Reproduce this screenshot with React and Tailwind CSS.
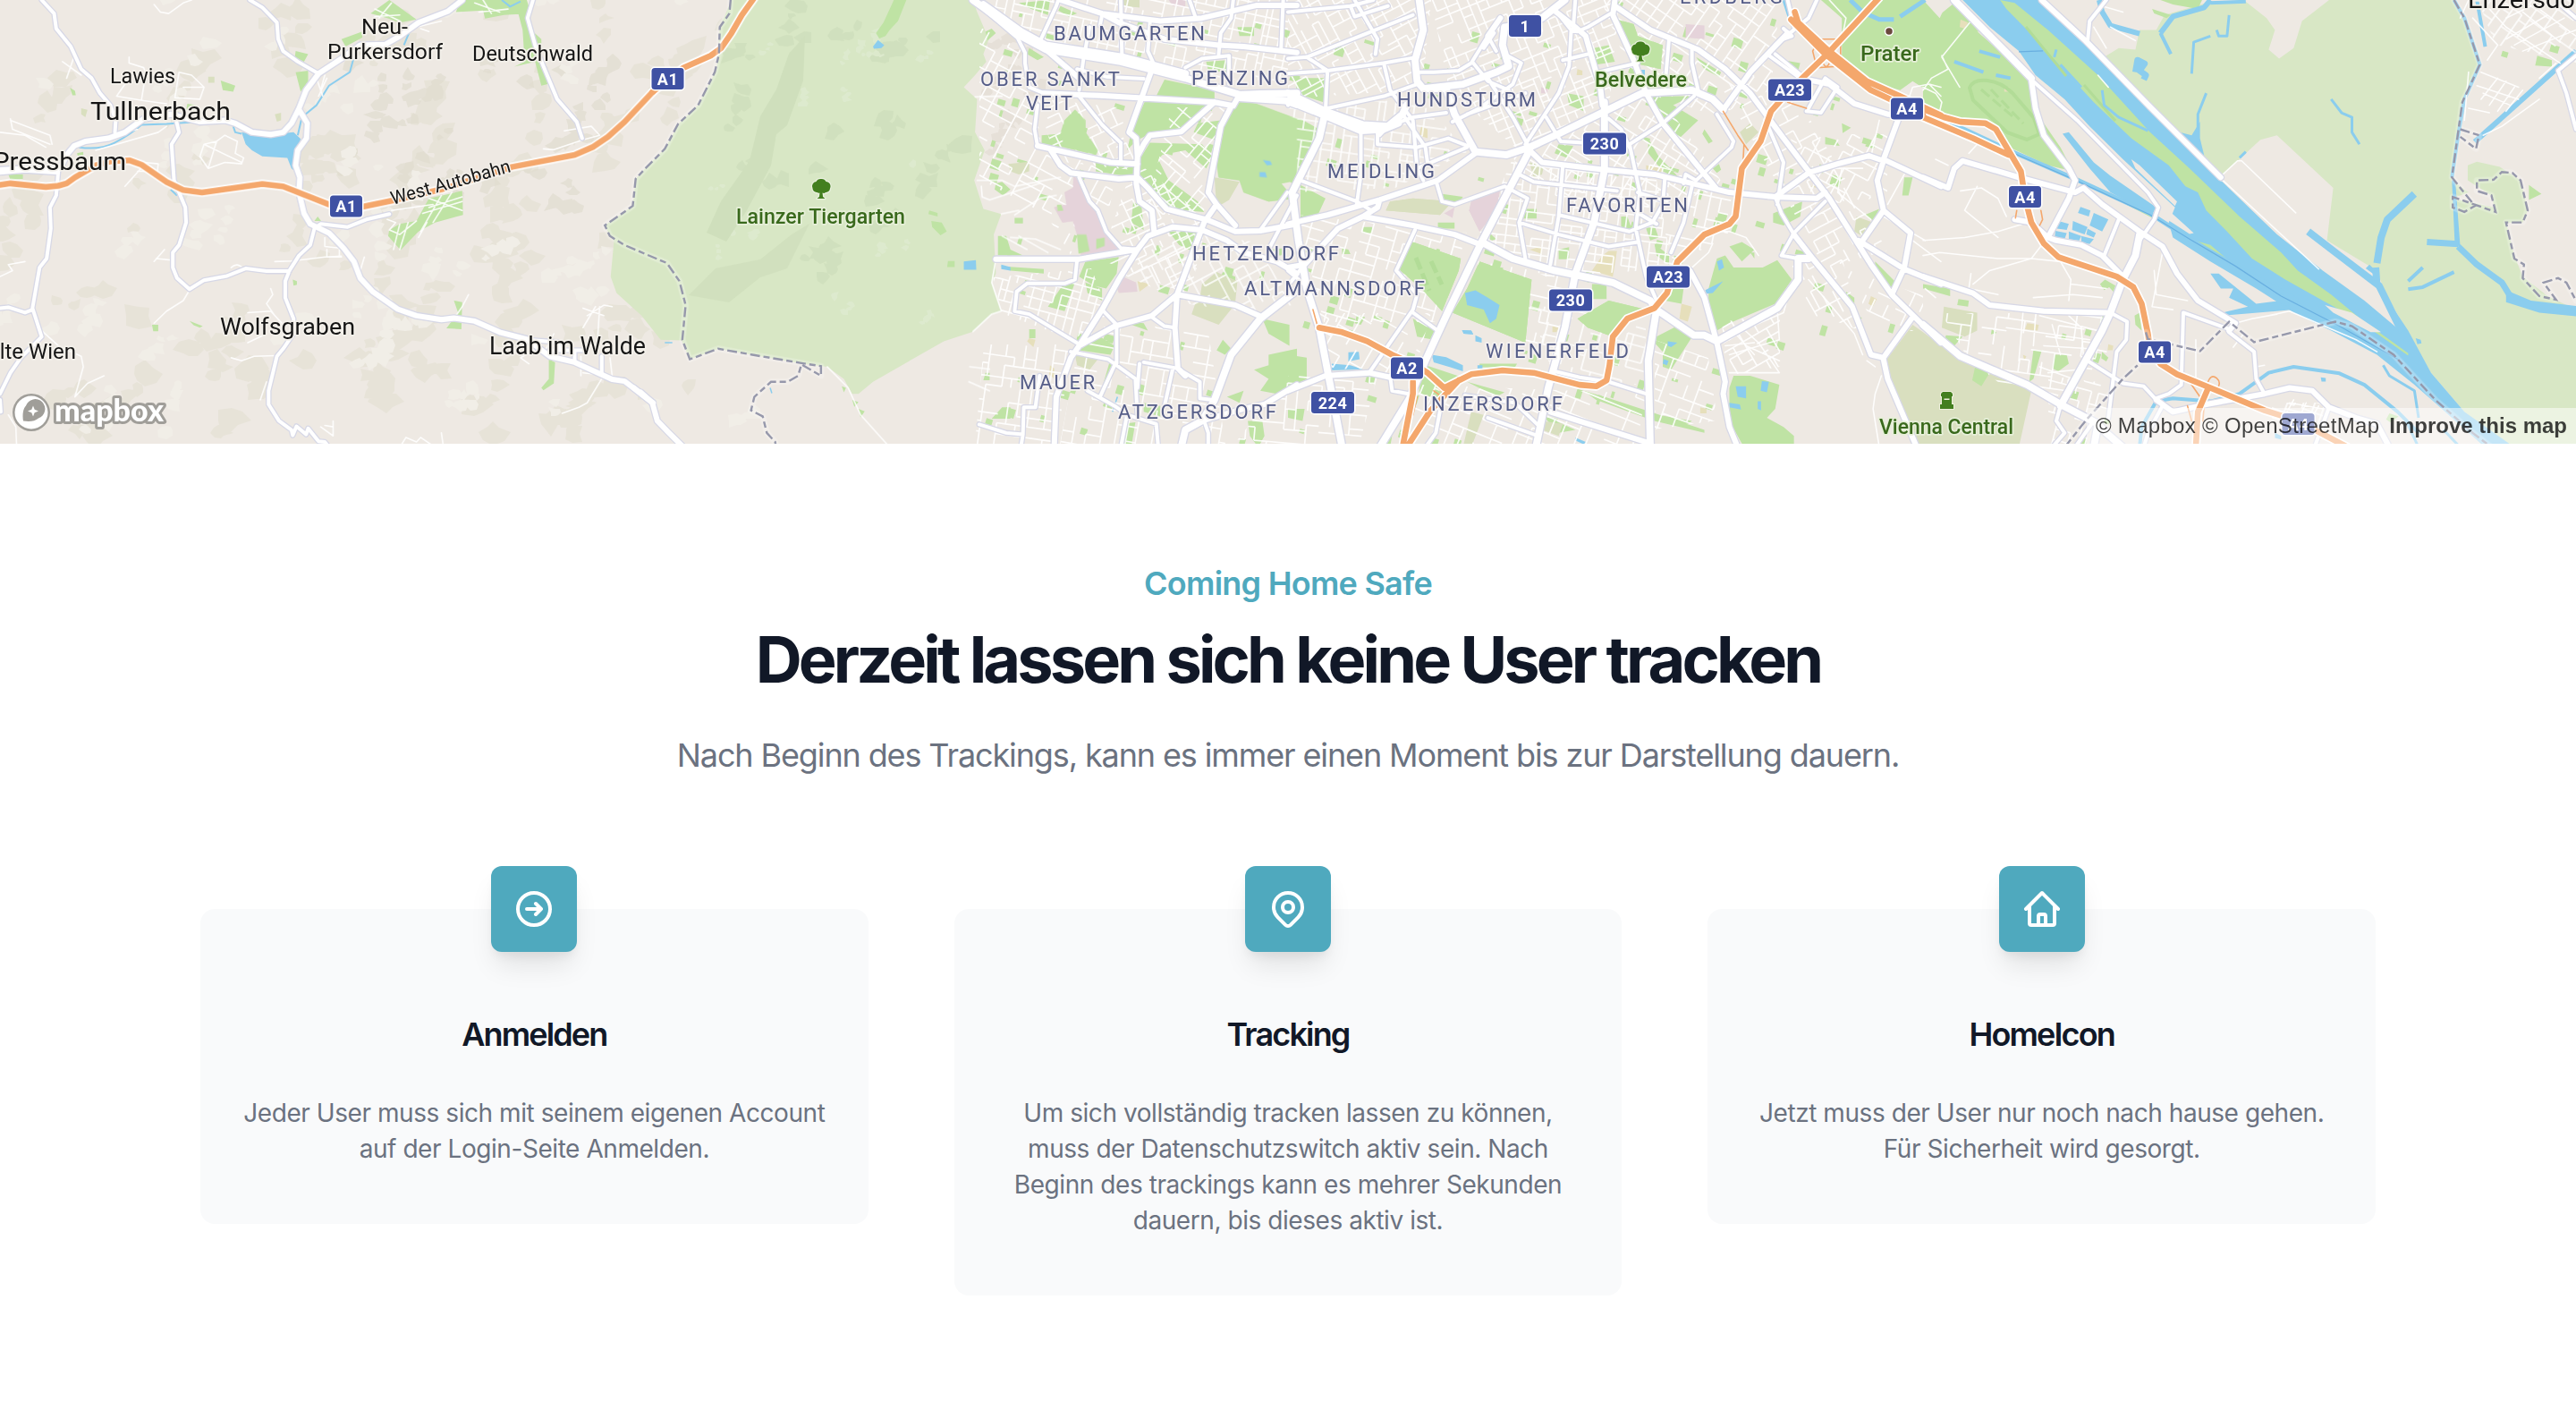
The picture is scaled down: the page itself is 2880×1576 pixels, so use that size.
import React from "react";

/* ------------------------------------------------------------------ */
/* Map data. Each tile keeps its own local grid and is placed by scale. */
/* ------------------------------------------------------------------ */

const SX = 730 / 1568;
const SY = 500 / 1488;

const LAND = "#eee9e3";
const PARK = "#bfe3a4";
const WOOD = "#d8e7c5";
const WATER = "#8bcdee";
const OLIVE = "#d9dfbf";
const TAN = "#e6dfbb";
const PINK = "#e5d3da";

const TILES = [
  {
    x: 0,
    woods: [],
    areas: [
      [PARK, "M890 45L935 0 1000 65 960 75 930 60zM820 130L870 105 870 125 830 155zM1105 0L1265 0 1275 45 1210 50 1165 62 1160 35 1095 40zM1240 20L1265 10 1268 90 1300 130 1300 200 1315 280 1300 285 1285 205 1235 222 1260 205 1255 100zM710 170L740 180 730 205 708 190zM710 240L740 235 740 270 722 305zM1030 660L1110 635 1112 715 1045 740 1005 770 962 832 932 785 935 765 960 745 1000 735zM530 268L565 285 560 305 535 300zM1090 1000L1110 1005 1108 1095 1072 1092 1100 1040zM1318 1195L1333 1205 1330 1275 1305 1298 1300 1290 1318 1260zM365 1080l15 0 0 22 -12 0zM455 1068L487 1085 480 1090 465 1082zM168 292l12 10 2 15 -8 0zM755 735l8 -15 8 15zM703 930l10 5 0 12 -8 3zM450 345l20 5 -5 20 -18 -5zM185 510l15 -5 0 20 -12 0zM20 580l35 0 0 15 -30 3zM408 370l20 0 0 20 -20 0z"],
      [OLIVE, "M500 255l15 0 0 20 -15 0zM195 360l15 5 -5 25 -10 -10zM660 380l15 -5 0 25 -10 5z"],
      [WATER, "M580 440L620 450 655 455 690 442 705 440 722 462 712 500 708 570 700 560 690 525 630 520 605 500 590 480z"],
    ],
    streams: [
      [2, "M850 190L840 240 790 285 760 350 725 390 715 450M190 490Q240 500 275 475T340 415L400 412 480 405M560 420L565 440 580 445M1205 0L1225 22 1250 5M985 100L970 150M410 630L425 650"],
    ],
    thin: "M310 190L310 210 345 225 350 245 315 250 280 320 345 335 400 345M350 245L340 330M430 240L460 250 490 290 480 330 420 325 430 240M440 290L490 290M150 205L195 250M180 180L160 260M370 15L385 40 405 45 440 10 460 0M25 395L30 430 120 480M0 440L60 450 110 490M25 400L120 450 125 480M200 480L330 430M230 500L380 440 400 420M345 540L380 545 378 570 330 570M345 550L300 620M540 450L570 470 565 510 585 525 580 545 540 540 500 560 480 520 490 480 520 470 540 450M520 470L500 560M490 480L580 540M760 260L775 320M780 250L770 300M785 260L765 320M940 700L1040 680M1030 660L1110 700M1030 690L1110 655M1015 710L1110 670M1060 650L1010 770M1085 640L1040 740M935 765L960 780 1000 735M960 745L945 830M980 740L960 830M930 730L950 740 935 765M780 790L780 820 815 825 815 855M785 830L785 855 820 855M700 868L780 855 820 852M875 855L865 900M375 860L410 865M395 830L370 870M555 890Q570 870 585 895M455 965L440 1000 400 1035 370 1075M650 960L655 980 640 1010 660 1050M595 1040L650 1035 680 1080M595 1140L640 1110M555 1190L580 1200 610 1185 660 1183M100 1100L140 1150 195 1185 200 1220 180 1320M180 1320L210 1275 250 1250M20 1380L38 1420 40 1488M640 1270L625 1330M780 1415L800 1420M800 1400L800 1450 770 1420M960 1488L975 1455 1000 1470 1010 1455 1045 1488M1060 1440L1065 1488M1125 980L1110 1020 1095 1050M1400 1025L1450 1050M1410 1050L1450 1015 1470 1020M1430 1020L1400 1090M1440 1020L1435 1130M1300 1150L1250 1190 1270 1210M1330 1110L1310 1165M1395 1185L1395 1250M1445 1260L1410 1340 1390 1355 1350 1375M1465 1190L1470 1250 1400 1240M1305 495L1330 498 1400 465 1440 450M1355 435L1420 420 1440 450M1000 90L1060 70M1010 95L1030 105M1200 40L1140 10M1180 45L1160 0M1220 30L1150 40M900 55L960 50M900 30L960 70M940 10L910 60M0 920L30 900 20 880 60 870M660 870L700 868M1005 790L1025 740",
    minor: "M100 0L130 45 135 95 170 155 195 230 220 260 240 310 265 350 278 400 276 440M600 0L630 25 665 75 668 130 680 170 715 205 765 245M1280 0L1267 60 1285 150 1305 220 1338 330 1385 405 1398 460M160 515L140 570 135 650 120 690 122 760 112 860 95 890 78 1025 100 1120 50 1190 25 1240 0 1310M0 1025L20 1022 60 1040 78 1030M423 400L430 440 412 480 418 600 445 690 447 740 430 815 415 840 415 890 425 925 455 962 490 932 545 918 590 893 640 902 695 902M935 712L880 730 835 755 770 745 755 760 745 815 718 850 695 900 685 935 685 990 705 1060 705 1110 680 1160 665 1185 645 1300 645 1345 670 1400 700 1430 703 1448 712 1418 735 1445 740 1425 765 1468 780 1470 790 1488M1265 1130L1340 1138 1345 1165M1320 1165L1400 1165M1380 1165L1380 1200M1445 1185L1445 1240M0 1330L2 1370M0 575L60 568 140 575",
    major: "M1110 0L1075 38 1005 75 960 120 925 148 865 150 820 195 765 245 735 300 718 360 700 410 680 440 650 447 605 440 565 410 540 400 480 405 410 380 345 395 330 410 300 440 260 460 205 470 178 485 160 515 145 560 60 560 0 565M718 365L738 410 736 460 715 500 710 550 720 590 718 640 730 710 745 745 790 775 825 825 850 870 865 925 895 970 955 1028 1000 1050 1060 1063 1090 1058 1140 1068 1200 1105 1265 1128 1320 1185 1380 1205 1470 1262 1500 1268 1568 1340",
    trunk: "",
    motorway: "M0 615L25 610 110 622 140 618 160 610 180 590 230 550 265 537 310 533 340 548 400 605 440 632 485 640 630 612 680 620 790 680 870 688 940 668 1060 630 1230 555 1380 515 1425 488 1460 455 1500 405 1568 305",
    ramps: "",
    border: "",
  },
  {
    x: 720,
    woods: [
      "M210 0L182 90 175 230 130 350 85 410 50 495 0 565 -20 595 -27 685 -94 750 -82 785 -72 800 -80 920 -66 975 -6 1050 40 1130 90 1132 110 1195 178 1160 380 1210 440 1220 480 1260 500 1310 515 1310 550 1270 720 1135 790 1103 835 1045 858 1035 835 940 845 910 840 780 858 712 815 695 793 600 818 500 795 440 800 330 768 290 795 250 822 205 815 180 828 130 800 40 790 0z",
    ],
    areas: [
      [PARK, "M600 0L630 0 610 70 590 100 580 120 565 128 557 110 575 75zM690 735L715 740 727 770 712 783 692 755zM685 700l20 8 0 12 -22 -8zM730 868h16v20h-18zM1425 335L1470 345 1568 395 1568 600 1530 610 1560 660 1500 670 1440 640 1430 600 1380 590 1375 540 1400 370zM1035 365L1060 400 1060 440 1090 500 1085 515 1010 490 955 480 955 450 1000 445 1010 400zM1190 530L1215 475 1340 480 1365 520 1350 560 1300 500 1245 515 1235 530 1260 600 1330 670 1345 705 1260 695 1230 640 1190 610zM1250 265L1370 300 1370 330 1230 320zM1205 330L1350 345 1310 400 1290 440 1215 445 1180 470 1160 500 1170 440zM1330 410L1385 400 1380 470 1320 440zM1060 870L1140 855 1135 910 1110 960 1080 950 1045 920zM1010 940L1040 920 1010 1035 970 1020zM845 610l15 -5 20 25 -18 20 -20 -20zM850 785L870 785 880 830 910 850 850 850zM1050 1145L1090 1115 1130 1150 1120 1180 1045 1165zM1568 1160L1568 1290 1520 1310 1480 1300 1500 1260 1465 1230 1500 1215 1500 1180zM1150 1410L1180 1405 1170 1488 1148 1488zM1450 1400L1485 1400 1490 1450 1475 1488 1455 1450zM1120 1195L1135 1210 1105 1310 1095 1315zM900 10L975 0 970 50 930 30zM1000 20L1040 45 1020 55 995 35zM1485 1060L1550 1080 1550 1150 1500 1110zM1390 1130l20 30 -15 20 -20 -15zM860 1355h20v38h-45zM1175 670L1195 690 1200 765 1170 740zM820 105l15 -10 10 15 -20 25zM890 725h20v18h-20zM1425 90h40v30h-35zM1060 940L1100 960 1100 1000 1065 975zM1085 540L1185 545 1180 590 1085 570zM1260 770L1330 770 1315 835 1285 815zM1390 905L1420 920 1420 950 1380 935zM1150 1070L1200 1075 1210 1100zM820 1240h10v25h-15zM500 1330l15 8 -10 15zM515 1360l15 8 -10 20zM475 1285l10 5 -5 15zM855 885L960 895 960 910 880 900zM925 160L960 190 945 200 920 180zM1500 830L1540 825 1530 850 1495 850zM1350 205L1400 200 1405 240 1355 235zM925 1095h15v30h-15zM1400 1320L1440 1300 1430 1340zM1200 1340L1240 1350 1240 1385 1200 1370z"],
      [PINK, "M1032 585L1050 610 1080 690 1110 760 1145 830 1050 850 1040 780 1030 735 1005 740 985 690 1015 680 1010 640 1030 625zM1150 920L1182 940 1185 970 1140 975 1135 955zM1260 0L1300 0 1300 25 1270 20z"],
      [PARK, "M1040 780l22 0 8 55 -26 8zM1086 795l20 -5 0 28 -20 10zM992 682l10 0 5 18 -14 2z"],
      [OLIVE, "M875 545L925 538 925 570 900 580 880 570zM1340 945L1375 905 1425 935 1420 1005 1335 990zM1325 1005L1415 1020 1380 1080 1315 1045zM1370 590L1430 605 1405 665 1375 690zM1035 1180L1090 1195 1070 1230 1040 1215zM1145 0L1190 0 1190 25 1150 20z"],
      [TAN, "M925 1125l15 5 -5 25 -15 -20zM1185 935l30 10 -25 25zM975 1215l10 10 0 35 -12 -15z"],
      [WATER, "M550 155L562 133 577 150 570 160 552 162zM768 870L797 865 798 897 768 897zM858 880L880 888 880 900 858 895zM1486 532l18 4 4 12 -12 2zM1478 572l14 0 4 18 -18 -2z"],
    ],
    streams: [[1.5, "M50 1140L68 1140M303 1290L307 1308M1137 1320L1125 1370"]],
    thin: "M440 1220L490 1290 520 1380 590 1488M845 862L835 940 858 1035 835 1045 790 1103M782 1220L830 1228M780 1270L830 1300M858 712L900 700M800 600L860 600 890 620 1000 590M810 620L812 655 830 665 950 610M860 785L920 830M900 785L970 840M880 790L940 795 1000 830M890 715L950 660 990 650M830 40L850 60M200 0M795 322L860 320",
    minor: "M995 0L990 20 950 140M895 120L915 175 915 210 925 290 960 310M1040 230L1110 255 1200 262M945 350L938 430 945 485M1145 475L1145 540M1145 0L1148 200M1215 75L1210 170 1230 230M1415 0L1410 60 1385 110 1380 180M1535 0L1530 160M1310 0L1325 60M1070 90L1055 200M1100 50L1095 85M1300 225L1340 195 1405 185 1405 280M1545 640L1480 765M1568 650L1500 830M1135 1200L1095 1320M1100 1030L1135 1080 1135 1210M1025 1170L1115 1195 1180 1260 1185 1380M1215 1050L1250 1085 1275 1090M1200 1205L1280 1225 1335 1270 1335 1325 1365 1330M1270 1225L1250 1350M1190 1210L1185 1290M805 1412L870 1440 910 1445 905 1488M910 1445L912 1355 940 1355 950 1250M1065 1300L1130 1350 1160 1380 1145 1488M1160 1380L1230 1410 1235 1488M1040 865L1035 930 1010 943 920 943 895 970 890 1035 925 1045 1045 1145M1345 1400L1355 1440 1355 1488M1045 590L1070 670 1090 700 1110 770 1145 825 1185 830M1045 320L1100 415 1145 475M1055 200L1045 300",
    major: "M1000 0L1100 45 1240 70 1340 60 1470 18 1568 18M1100 45L1140 75 1250 130 1380 150 1440 155 1568 175M815 25L895 120M965 165L1045 260M960 310L1095 318 1370 340 1415 352 1430 315M945 485L1120 540 1185 545M975 495L1000 550 1025 575 1140 595 1185 590 1210 625 1255 695 1350 730 1420 770 1480 768 1568 745M1220 230L1165 440 1182 460 1185 520 1182 610 1190 670 1220 700 1225 770M1370 340L1290 438 1215 450 1200 480 1185 520M1408 360L1385 420 1355 640 1375 680 1420 750M1375 680L1345 740 1280 980 1275 1090 1282 1225 1300 1250M845 862L1045 862 1185 830 1210 785 1270 755 1340 765 1400 800 1440 840 1520 870 1568 910M1185 830L1140 930 1100 1030 1045 1150 1025 1190 990 1320 985 1488M1045 1150L1130 1085 1220 1050 1280 980 1420 1015 1485 1055M1568 1280L1490 1345 1440 1360 1340 1400M21 1340L-25 1290M-8 1305L20 1340 32 1400 60 1440 95 1488",
    trunk: "M1568 965L1480 1060 1410 1180 1370 1330 1340 1400 1300 1430 1290 1488M1430 315L1480 312 1568 310M1430 325L1540 335 1568 348M790 0L815 25 905 120 965 165 1145 205 1300 260 1430 315M815 15L905 105 965 150 1150 190 1300 245",
    motorway: "M21 305L95 225 160 185 185 160 210 110 235 50 265 -8",
    ramps: "",
    border: "M208 0L205 45 182 90 180 180 170 240 130 350 82 412 50 495 0 565 -20 595 -27 685 -94 750 -82 785 -47 815 0 843 55 875 85 935 100 1015 92 1130 110 1195 178 1160 260 1180 375 1207 425 1218 425 1250 378 1212 370 1250 345 1270 305 1270 265 1320 257 1365 285 1385 295 1440 315 1470 317 1488",
  },
  {
    x: 1440,
    woods: [],
    areas: [
      [PARK, "M780 60L830 80 840 120 900 150 895 230 830 210 800 130zM650 480L685 485 670 525 640 510zM870 320L970 320 925 350 985 400 940 460 905 400zM865 460L890 520 945 600 900 570 865 510zM0 390L30 395 75 430 50 520 10 610 0 600zM20 260L90 260 85 340 20 310zM370 645L420 655 405 685 370 665zM30 615L90 660 70 720 30 725zM300 805L415 860 410 900 370 1035 320 960 270 900 265 870zM460 870L585 930 570 1140 395 1040 430 960zM300 1060L355 1100 350 1130 310 1120zM695 1060L770 1000 860 1030 790 1090 770 1115 720 1090zM1010 1000L1010 960 1030 860 1050 850 1070 890 1140 890 1175 865 1210 930 1170 1010 1060 1075 1030 1100 1010 1030zM1060 820L1090 805 1120 830 1090 870zM900 950L950 960 945 1010 905 1000zM730 945h35v50h-35zM885 1120L940 1080 980 1100 920 1230 900 1220 900 1170 880 1140zM1070 1250L1110 1250 1180 1280 1170 1360 1150 1390 1190 1420 1215 1450 1215 1488 1095 1488 1060 1400 1060 1290zM320 1210L430 1260 400 1290 370 1330 315 1310zM710 1300L760 1320 870 1370 1000 1430 1000 1440 880 1400 740 1330zM0 1180L45 1190 45 1260 0 1300zM1280 0L1568 0 1568 330 1500 270 1470 300 1390 270 1330 190 1330 60zM735 160L770 150 785 205 740 215zM670 310L710 320 710 370 675 350zM565 695h32v32h-32zM650 830l25 -8 0 40 -25 0zM180 755h22v20h-22zM880 810L915 850 915 880 885 850zM430 1270L520 1305 500 1320zM460 1210L550 1210 545 1222 460 1222zM1190 200L1230 210 1225 235 1195 225zM1330 410l22 15 -20 18zM1165 710L1235 670 1230 720 1190 750 1165 740zM1385 715L1420 695 1405 735zM1480 590L1500 590 1490 650 1475 650zM1410 870L1460 940 1450 960 1410 910zM1340 970l20 20 0 25 -18 -15zM1000 430L1020 470 1010 478 995 445zM800 720h15l10 40 -25 0zM480 770L500 795 490 800 470 785zM130 825l15 5 5 15 -20 0zM890 1380L970 1400 960 1410 900 1400zM610 1380L690 1430 650 1440zM220 1488L225 1460 250 1450 245 1488zM1290 455l25 10 10 20 -35 -5zM980 190L1040 240 1035 255 1000 230zM165 1050l20 5 -10 25 -15 -5zM1020 560l15 -15 5 20 -10 10zM0 1360L40 1360 35 1400 0 1390zM1110 840l10 0 0 20zM360 740h40v20h-40zM860 760L880 750 890 790 870 800z"],
      [PINK, "M440 670L510 625 500 700 460 770 435 700zM375 710L400 690 395 725zM955 80L1000 85 1000 130 955 125zM608 290l15 5 0 15 -15 0z"],
      [OLIVE, "M1110 410L1130 440 1100 480 1085 440zM580 540L615 550 610 580 590 590zM245 670L300 660 395 670 365 715 235 700zM1365 720L1405 740 1385 790 1360 770zM440 1370L470 1380 440 1488 420 1488zM610 1400L660 1410 650 1450 610 1430z"],
      [TAN, "M755 850L770 835 790 835 780 920 730 900zM580 830L610 820 610 845zM945 1010L970 1020 960 1070 940 1060zM320 420l15 10 0 30 -20 -10zM860 550L900 560 900 575 860 575zM695 230l12 5 0 15 -14 0zM990 1355l15 5 0 15 -15 0zM1400 985l14 10 -10 25 -10 -10zM1255 620l15 -8 5 15zM635 1085l14 5 -4 15 -10 0z"],
      [WATER, "M425 975L450 966 480 990 508 1015 500 1060 485 1075 470 1030 430 1015zM418 1098L440 1100 445 1112 422 1110zM450 1115l15 10 0 15 -15 -5zM345 1180L380 1188 420 1215 420 1235 390 1222 350 1205zM105 1210L150 1215 180 1228 105 1232zM145 1172L170 1170 172 1195 145 1202zM1030 870L1042 862 1047 890 1035 900zM1002 965L1045 935 1020 975 1005 977zM912 1135L935 1140 920 1155 912 1150zM1075 1285L1100 1285 1100 1325 1080 1320zM1138 1268L1155 1270 1150 1305 1135 1300zM1060 1340L1085 1345 1088 1362 1060 1355zM1128 1335l8 0 0 30 -8 -5zM690 1455L715 1470 710 1478 690 1465zM902 1195l12 5 -4 15 -10 -5zM845 232l12 0 0 18 -10 0zM455 1215l12 0 0 10 -12 0z"],
    ],
    streams: [[5, "M1350 0L1380 40 1420 65 1455 65M1470 55L1530 0M1192 0L1205 55"]],
    thin: "M1210 940L1190 1040 1090 1100 1060 1130M1175 1030L1180 1130 1060 1180M1090 1090L1130 1140 1180 1240 1060 1240M1245 990L1270 1050M1250 930L1300 1010 1360 1110 1380 1180M1390 1200L1410 1220M1425 1250L1410 1310 1405 1360 1420 1488M1075 1110L1120 1180M1100 1150L1180 1200M1050 1150L1120 1140M1480 580L1440 680M1300 0L1340 60 1330 130M1568 290L1540 280 1500 290 1490 330M1540 280L1568 320M1000 770L1060 770 1100 790 1130 850M970 890L1010 840 1020 810M940 470L985 560 1010 590M1420 400L1400 520 1440 545M1220 580L1290 560 1380 560M1430 720L1530 800M1490 790L1568 870M1330 560L1320 640 1400 730",
    minor: "M0 195L45 190 155 130 300 50M0 245L95 235 230 210 310 190M45 190L95 235 90 370M160 0L215 130 210 180M0 40L150 20 205 0M150 20L160 55 240 20M230 210L245 300 300 400 310 560 325 600M95 360L230 320 310 280M175 430L175 580 165 680M30 600L165 670 200 700M215 440L215 480 310 490 385 460 430 485M355 600L370 670 400 680 520 620 575 660 555 740 570 860M555 580L590 605 790 635M660 550L650 720 630 880M555 740L650 780 770 820 840 805M650 715L820 770 875 740 900 680 905 595M970 620L950 740 920 840M820 480L845 640 835 760 860 920 885 1000M620 390L655 470 710 475M680 100L675 220 650 310 570 480M480 260L540 390 575 480M560 210L540 280 460 360 395 405M445 210L480 270 530 300M970 165L970 210 985 300M915 130L905 290M975 320L900 410 820 480M770 395L800 430 820 490M1065 490L980 600 955 580 950 610M1030 380L1070 470 1065 490M1150 410L1190 540 1175 680M1250 360L1290 260 1320 290 1280 375 1245 370M1150 180L1230 260M1200 0L1215 90M195 1240L300 1030 310 980 260 900 305 765M300 1040L360 1100M640 1235L700 1255 770 1270 860 1310M425 1330L425 1315 545 1340 605 1420M480 1390L600 1450M370 1330L355 1440 330 1488M245 1250L250 1300 290 1310M310 240L350 240 410 235 440 210 480 120 510 60M275 380L330 490 335 540M560 210L520 180M0 900L60 970M45 870L0 950M80 820L40 880M680 100L695 105 720 90 775 45M640 30L680 100M660 200L720 180M840 640L910 670M830 700L885 745M0 350L20 310M240 420L220 450M380 375L300 390 240 420M430 380L570 310M310 560L430 490M480 120L500 170M470 160L495 110M965 900L1000 990 1030 1140M1170 655L1185 710 1215 780M1290 670L1215 775 1185 850 1225 860M1270 0L1250 60 1170 150M1190 95L1210 120 1190 130M690 0L685 90M1170 180L1250 270M745 240L840 210",
    major: "M0 745L95 715 220 665 360 600 450 510M0 890L40 880 80 820 120 760 180 720 215 690 220 665M180 720L300 750 400 780 465 815M580 500L610 540 760 565 880 580 1060 640 1170 655 1270 660 1290 640M785 0L780 50 830 200 860 310 900 410 1030 630M785 20L870 100 985 165 1050 230 1110 310 1190 460 1300 660 1400 880 1450 980 1568 1140M755 350L750 290 715 120 690 90 635 30M1045 365L1110 240 1200 110M1230 260L1300 280 1360 345 1440 380 1470 380 1430 530 1568 620M1170 655L1250 575 1320 545 1395 518 1430 535 1415 600 1430 700 1380 800M1430 700L1495 775 1480 890 1450 980M1370 800L1480 895 1568 945M1215 780L1260 860 1355 1020 1400 1180 1430 1190 1500 1055M1430 1195L1440 1260 1480 1390 1510 1488M965 900L1000 990 1030 1140 1050 1270 1045 1310 1060 1420 1080 1488M0 1300L90 1250 195 1240 245 1255M630 1370L870 1475M0 310L90 370M480 120L510 60",
    trunk: "M315 0L325 100 305 200 310 270 325 295 380 295 400 380 450 505 525 515 580 490 650 445 850 310 970 300 1020 330 1045 365M0 310L90 370 180 415 240 420 275 380 285 350M0 335L90 385 175 435 230 430 265 410M325 295L420 280 500 240 530 220 515 150 520 90 570 80 610 60 665 0M465 805L540 860 640 900 780 940 870 1000 885 1030 975 1115 1000 1115 1030 1135 1175 1025 1225 930 1225 860 1250 860M580 500L465 805 385 1035 330 1200 290 1330 220 1488M760 340L760 565 735 740 690 910 665 1090 625 1290 595 1488M90 370L75 460 10 640 25 800 45 960 75 1090 100 1270 130 1488M885 1030L865 1200 870 1488",
    motorway: "M75 1090L130 1105 190 1135 250 1180 300 1210 335 1240 375 1290M375 1290L440 1245 515 1232 590 1240 700 1280 740 1285 765 1265 772 1215 780 1120 815 1060 880 1025 910 975 935 870 1000 780 1060 745 1075 720 1090 560 1110 520 1135 470 1160 370 1205 300 1295 180 1420 -8M300 1270L300 1310 275 1488M410 1265L340 1370 285 1488M1217 40L1225 75 1295 165 1390 270 1470 320 1568 384M1208 65L1290 180 1400 300 1525 382",
    ramps: "M1045 370L1080 450 1105 500M1095 480L1092 560M1275 130L1327 130 1327 220 1270 225 1260 170 1275 130M1280 190Q1290 240 1300 210T1285 160M1200 340L1245 360M60 1030L72 1090M215 1140L245 1190M360 1270L400 1280 380 1320 355 1280M310 1320L300 1380M350 1300L370 1320",
    border: "",
  },
  {
    x: 2150,
    woods: [
      "M975 0L1275 0 1300 60 1337 215 1300 330 1285 450 1270 600 1310 640 1270 660 1370 690 1450 720 1400 740 1420 850 1440 920 1500 985 1568 1030 1568 1488 1410 1488 1300 1370 1220 1240 1110 975 1090 900 970 800 985 625 850 450 810 465 720 580 545 340 435 190 470 160 510 165 520 100 560 100 580 50 680 10 770 0 825 60 845 100 830 165 855 195 890 160 910 70 975 0z",
      "M1308 550L1330 538 1385 555 1435 600 1452 700 1440 740 1400 740 1375 705 1365 650 1330 620 1308 600z",
    ],
    areas: [
      [WATER, "M95 0L285 0 400 165 545 360 715 600 850 780 960 900 1060 1000 1150 1105 1110 985 1165 1100 1220 1240 1300 1370 1420 1488 1350 1488 1180 1280 1090 1180 980 1100 890 1040 800 960 690 870 600 790 590 740 605 690 480 530 400 420 340 330 270 250 230 170 160 90z"],
      [PARK, "M185 0L220 10 300 100 420 250 545 440 640 560 760 720 860 840 900 900 980 980 1050 1060 1165 1175 1165 1183 1040 1060 960 1000 870 930 790 860 730 770 680 700 660 640 630 620 590 550 500 460 410 340 330 220 250 100 200 30z"],
      [PARK, "M0 0L30 60 75 10 130 100 200 190 255 260 270 370 330 490 360 570 300 550 215 495 180 430 150 405 90 400 0 365z"],
      [LAND, "M0 0L60 0 40 60zM130 105L170 110 220 180 200 190zM240 225L252 215 270 260 255 260z"],
      [OLIVE, "M-25 1080L0 1105 90 1200 260 1300 230 1488 -15 1488 -60 1330 -95 1210zM50 1020L130 1040 130 1100 100 1120 45 1090z"],
      [LAND, "M965 1015L1030 1040 1100 1105 1075 1105 985 1040zM500 530L520 550 610 670 605 685 555 620 510 560zM590 700L650 775 640 778 575 720z"],
      [PARK, "M640 795L690 815 750 885 735 875 690 830zM370 590L560 725 550 725 375 600zM550 30L595 50 585 60 555 45zM570 0L670 0 660 30 600 15zM1455 615L1485 645 1455 665zM1475 185L1510 200 1510 222 1470 218zM0 945L65 960 65 985 0 960zM85 995L110 1000 108 1020 82 1015zM425 945l12 -15 25 20 -5 20 -10 -15 -12 10zM265 1165L285 1165 265 1260 255 1270zM315 1180L345 1180 350 1210 325 1235 310 1225zM125 1220L160 1240 140 1285 118 1265zM55 1115L95 1120 75 1150 50 1140zM430 1170l15 20 -5 12 -12 -10zM508 1050L520 1040 525 1100 510 1080zM1120 1375l22 10 -20 20 -10 -10zM165 1095l12 12 -14 5z"],
      [TAN, "M250 1075L278 1080 275 1100 245 1095zM445 1145l12 5 -2 15 -12 0zM195 290h12v15h-12zM240 1180l8 5 -5 15zM90 65l18 10 -8 20 -12 -5z"],
      [WATER, "M335 445L350 440 410 540 450 585 560 690 550 715 450 640 400 560zM690 910L710 910 800 1010 850 1002 890 1030 720 1050 725 1038 780 1020 735 990 745 960 715 960zM378 688L402 700 398 720 372 708zM410 708L445 730 430 770 400 750zM325 735L350 745 345 765 322 760zM360 735L395 755 388 780 358 765zM395 760L415 775 410 790 392 780zM318 768L345 775 340 795 316 790zM350 770L380 785 375 800 350 795zM380 785L410 795 400 812 380 805zM612 438L645 450 665 405 665 460 677 528zM1270 600L1278 600 1290 820 1277 815zM1400 965L1460 1000 1568 1018 1568 1052 1480 1040 1400 1005zM1183 1125l12 5 2 12 -10 3zM955 1255l12 2 0 12 -10 0zM1072 880l15 20 -2 15 -22 -22zM845 1440l15 10 0 12 -15 -5z"],
    ],
    streams: [
      [6, "M570 110L600 55 675 25 690 0M423 0L430 40 450 85 520 112M1568 170L1325 472"],
      [4, "M570 110L595 180M690 10L775 5M1275 0L1300 60 1337 215 1300 330 1285 450 1270 590M1165 935L1200 890M1165 962L1200 955 1275 905M520 1488L525 1420 560 1335 600 1325 690 1335 760 1310 830 1240 890 1220 1000 1242 1060 1280 1140 1370 1190 1440M1330 0L1350 155M135 170L185 190M75 205L145 240M175 250L210 260"],
      [3, "M645 245L650 140 690 120M705 100L710 120 730 120 735 50M680 310L660 380 660 440M980 330L1005 375 1030 390 1030 440 1048 480M760 525L775 505M1105 1215L1120 1250 1180 1300 1190 1390M320 165L315 190M330 215L380 290M430 300L435 350 470 390 540 435M1160 1400L1190 1488M1250 1430L1290 1488"],
      [7, "M510 240L515 200 532 212 520 235 535 250 530 265M1285 820L1330 880 1390 940 1410 985M1210 805L1285 812"],
      [8, "M925 770L1000 850 1095 950 1150 1105M1180 645L1115 730 1100 790 1090 875M1087 890L1090 950"],
      [5, "M60 405L215 505 370 598 545 710 640 795 750 885 900 1000"],
    ],
    thin: "M115 70L45 190 88 290M45 185L60 230 20 260 0 300M0 290L30 310 45 340 40 370M715 600L720 600 950 895M720 580L755 535 765 535 895 708M0 800L100 790 180 770 240 745M120 945L160 900 260 860 310 770M115 910L110 960 180 980M90 635L140 625 180 660 200 720M0 850L40 840 180 860 260 860 330 870 355 930 350 1000M130 620L100 700 180 790M355 945L440 960M265 990L360 980 430 990M555 900L560 980 635 1000M575 840L550 1020 600 1030M130 480L110 510M30 530L60 550M420 250L445 290M830 1050L880 1035 1040 1130 1090 1170M750 1075L790 1060 850 1045M745 1155L770 1110M655 1130L655 1260M800 1220L820 1215M405 1160L440 1170M1340 240L1430 290M1310 360L1360 375M1330 285L1430 330M1345 310L1410 350M1380 260L1340 330M1400 270L1360 350M1420 290L1380 370M1440 300L1400 370M1310 240L1300 400M1360 30L1400 90 1530 210M1320 60L1380 150 1355 200M1420 150L1540 60M1400 130L1500 50M1440 170L1568 100M1440 40L1530 140M1480 30L1568 120M1400 60L1460 20M1480 330L1390 420 1345 450M1310 0L1290 60M410 90L440 160M450 90L510 135M430 20L480 40M1480 260L1520 210M5 960L30 990M240 1040L230 1200M270 1060L265 1150M310 1080L330 1180M350 1050L380 1090 385 1180M280 1050L420 1100M200 1090L400 1130M290 1150L400 1160M300 1240L370 1230M280 1220L360 1260M880 1340L960 1360M870 1360L940 1380M890 1330L870 1380M920 1340L900 1400M950 1350L930 1400",
    minor: "M440 0L400 70 395 140M435 850L470 730M735 1095L625 1040 620 1280 590 1310 560 1325M735 1105L795 1170 800 1260 820 1310M450 1040L490 1070 488 1130 465 1170 455 1280 445 1390M575 1350L540 1440 530 1488M975 1355L940 1488M1568 60L1530 15M1525 235L1545 310 1568 430M1525 235L1568 185M395 1200L480 1275 530 1285 560 1330M410 1400L365 1488M330 1350L320 1400 340 1440 310 1488M260 265L370 400 540 640 565 690 555 730 520 800",
    major: "M0 590L60 625 75 560 95 535 230 590 365 640 385 625 430 680 520 770 575 820 610 910 660 1000 750 1075 735 1100M300 790L320 800 380 815 430 850 480 920M0 920L120 975 160 1015 290 1035 440 1040M220 730L260 740 300 790 350 660 365 600M560 1330L600 1370 680 1345 820 1310 880 1290 935 1300 975 1355 1040 1390 1090 1410 1120 1488M285 0L390 135 545 355 715 590M260 265L270 360 290 450 350 560 365 600",
    trunk: "M75 0L200 175 260 260M520 780L510 850 480 930 450 1040 430 1100 330 1350M0 1080L90 1185 250 1280 330 1345 420 1410 440 1440 480 1488M420 1410L410 1488",
    motorway: "M0 363L50 390 90 405 150 410 175 430 205 500 235 570 245 660 260 740 290 810 325 855 465 920 505 955 525 1010 540 1110 545 1160 570 1210 610 1245 690 1290 820 1365 900 1400 1020 1488M0 390L120 460 205 515M685 1290L660 1370 655 1488",
    ramps: "M225 700L222 725M283 700L287 730 280 750M682 1280Q690 1240 705 1258T700 1300M640 1270L665 1320M635 1350L645 1400M675 1350L672 1400M705 1290L720 1310",
    border: "M340 1488L390 1400 480 1260 515 1215M535 1105L540 1128 665 1168 735 1070 795 1138 990 1070 1030 1085 1130 1180 1230 1330 1320 1440 1365 1488M1275 0L1300 60 1337 215 1295 340 1270 590 1325 685 1300 705 1272 690 1272 655 1375 705 1365 650 1330 635 1330 600 1370 598 1390 572 1415 575 1435 600 1452 700 1440 740 1400 740 1420 860 1443 880 1440 925 1480 985 1520 997 1490 940 1525 925 1545 940 1568 1000M1290 430L1335 450 1328 495 1290 455",
  },
];

/* Seeded generator, so that the street texture is the same on each load. */
function seeded(seed) {
  let s = seed;
  return () => {
    s = (s * 1664525 + 1013904223) % 4294967296;
    return s / 4294967296;
  };
}

function streetGrid(seed, size, step, keep) {
  const rnd = seeded(seed);
  const half = size / 2;
  const n = Math.floor(size / step);
  const pos = () => Array.from({ length: n + 1 }, (_, i) => Math.round(i * step - half + (rnd() - 0.5) * step * 0.5));
  const xs = pos();
  const ys = pos();
  let d = "";
  for (let i = 0; i <= n; i++) {
    for (let j = 0; j < n; j++) {
      if (rnd() < keep) d += `M${xs[j]} ${ys[i]}H${xs[j + 1]}`;
      if (rnd() < keep) d += `M${xs[i]} ${ys[j]}V${ys[j + 1]}`;
    }
  }
  return d;
}

/* Quarters in map pixels: outline, rotation, block size, density. */
const QUARTERS = [
  ["1106,0 1440,0 1440,90 1330,88 1180,60 1120,20", 12, 11, 0.75],
  ["1095,30 1150,60 1165,170 1250,180 1230,290 1200,290 1170,240 1095,200", 28, 13, 0.6],
  ["1160,110 1250,120 1270,180 1350,245 1330,330 1230,290 1265,190 1180,180", 65, 11, 0.7],
  ["1110,310 1220,300 1240,350 1200,380 1120,350", 15, 10, 0.75],
  ["1100,385 1200,385 1180,496 1090,496", 8, 13, 0.7],
  ["1210,365 1350,365 1370,496 1185,496", 10, 15, 0.6],
  ["1240,300 1330,260 1400,270 1450,340 1400,350 1330,340", 62, 12, 0.65],
  ["1310,120 1375,120 1345,240 1280,240", 40, 11, 0.6],
  ["1440,0 1600,0 1590,100 1440,110", -28, 11, 0.75],
  ["1440,120 1590,110 1640,170 1560,210 1445,215", 8, 11, 0.75],
  ["1600,0 1810,0 1800,110 1700,170 1620,100", -22, 11, 0.75],
  ["1790,0 1990,0 1980,100 1920,130 1830,100", 35, 12, 0.7],
  ["1690,170 1850,100 1930,210 1810,240 1700,200", -58, 12, 0.7],
  ["1690,180 1850,190 1870,300 1730,310 1650,270", 7, 10, 0.8],
  ["1840,180 1940,215 1930,270 1870,290", 12, 12, 0.6],
  ["1920,90 2010,110 2110,280 2040,300 1990,210 1950,140", 62, 12, 0.5],
  ["2000,150 2110,150 2110,220 2030,230", 28, 13, 0.5],
  ["1450,240 1640,260 1610,360 1480,360", 16, 13, 0.65],
  ["1470,350 1600,350 1580,420 1480,410", -60, 15, 0.5],
  ["1440,420 1540,420 1520,496 1380,496", 5, 13, 0.55],
  ["1640,290 1760,310 1740,390 1700,400 1700,320", 13, 13, 0.6],
  ["1590,430 1840,440 1830,496 1560,496", 22, 15, 0.6],
  ["1710,340 1840,360 1840,430 1740,430", 15, 12, 0.5],
  ["1850,380 1910,400 1920,470 1850,480", 20, 13, 0.6],
  ["1925,360 1990,350 1990,410 1930,420", -30, 11, 0.6],
  ["2000,290 2060,290 2080,370 2030,350", 62, 12, 0.5],
  ["2060,300 2150,330 2150,370 2100,370", 25, 13, 0.5],
  ["2170,350 2360,350 2330,440 2250,440 2200,400", 8, 14, 0.5],
  ["2290,420 2370,430 2350,496 2290,496", 15, 12, 0.5],
  ["2770,0 2880,0 2880,70 2790,50", 35, 13, 0.6],
  ["2540,450 2600,450 2600,475 2540,475", 20, 10, 0.7],
];

function box(points) {
  const p = points.split(" ").map((s) => s.split(",").map(Number));
  const xs = p.map((q) => q[0]);
  const ys = p.map((q) => q[1]);
  const x0 = Math.min(...xs);
  const x1 = Math.max(...xs);
  const y0 = Math.min(...ys);
  const y1 = Math.max(...ys);
  return { cx: (x0 + x1) / 2, cy: (y0 + y1) / 2, size: Math.hypot(x1 - x0, y1 - y0) + 30, x0, x1, y0, y1 };
}

/* Faceted relief patches, each a short chain of angular slopes along a ridge. */
function relief(seed, count, x0, x1, y0, y1, size) {
  const rnd = seeded(seed);
  let d = "";
  for (let i = 0; i < count; i++) {
    let cx = x0 + rnd() * (x1 - x0);
    let cy = y0 + rnd() * (y1 - y0);
    const heading = -0.3 - rnd() * 1.3;
    const links = 1 + Math.floor(rnd() * 4);
    for (let l = 0; l < links; l++) {
      const r0 = size * (0.4 + rnd() * 0.6);
      const k = 8;
      for (let j = 0; j < k; j++) {
        const a = (j / k) * Math.PI * 2;
        const r = r0 * (0.5 + rnd() * 0.9);
        d += `${j ? "L" : "M"}${(cx + Math.cos(a) * r).toFixed(0)} ${(cy + Math.sin(a) * r * 0.8).toFixed(0)}`;
      }
      d += "z";
      const turn = heading + (rnd() - 0.5) * 1.4;
      cx += Math.cos(turn) * size * 1.1;
      cy += Math.sin(turn) * size * 1.1;
    }
  }
  return d;
}

function smallGreens(seed) {
  const rnd = seeded(seed);
  let d = "";
  QUARTERS.forEach(([pts]) => {
    const b = box(pts);
    const n = Math.round(((b.x1 - b.x0) * (b.y1 - b.y0)) / 2400);
    for (let i = 0; i < n; i++) {
      const x = b.x0 + rnd() * (b.x1 - b.x0);
      const y = b.y0 + rnd() * (b.y1 - b.y0);
      const w = 3 + rnd() * 8;
      const h = 3 + rnd() * 8;
      d += `M${x.toFixed(1)} ${y.toFixed(1)}l${w.toFixed(1)} ${(w * 0.3).toFixed(1)} ${(-h * 0.3).toFixed(1)} ${h.toFixed(1)} ${(-w).toFixed(1)} ${(-w * 0.3).toFixed(1)}z`;
    }
  });
  return d;
}

const PLACE = "#151515";
const QUARTER = "#555d88";
const GREEN = "#39691c";

/* text, x, baseline, width, size, colour, weight */
const LABELS = [
  ["Neu-", 404, 38, 52, 23, PLACE, 400],
  ["Purkersdorf", 366, 65.5, 129, 23, PLACE, 400],
  ["Deutschwald", 528, 67.5, 135, 23, PLACE, 400],
  ["Lawies", 123, 93, 73, 23, PLACE, 400],
  ["Tullnerbach", 101, 134, 157, 28, PLACE, 400],
  ["Pressbaum", -8, 189.5, 149, 28, PLACE, 400],
  ["Wolfsgraben", 246, 374, 151, 26, PLACE, 400],
  ["Laab im Walde", 547, 395.5, 175, 27, PLACE, 400],
  ["Alte Wien", -16, 401, 101, 23, PLACE, 400],
  ["Enzersdorf", 2759, 9, 140, 27, PLACE, 400],
  ["Lainzer Tiergarten", 823, 249.5, 189, 23, GREEN, 500],
  ["Belvedere", 1783, 97, 103, 23, GREEN, 500],
  ["Prater", 2080, 67.5, 66, 23, GREEN, 500],
  ["Vienna Central", 2101, 485, 150, 23, GREEN, 500],
  ["BAUMGARTEN", 1178, 44.5, 169, 22, QUARTER, 400],
  ["OBER SANKT", 1096, 96, 156, 22, QUARTER, 400],
  ["VEIT", 1147, 122.5, 52, 22, QUARTER, 400],
  ["PENZING", 1332, 95, 108, 22, QUARTER, 400],
  ["HETZENDORF", 1333, 290.5, 164, 22, QUARTER, 400],
  ["ALTMANNSDORF", 1391, 330, 202, 22, QUARTER, 400],
  ["MAUER", 1140, 435, 84, 22, QUARTER, 400],
  ["ATZGERSDORF", 1250, 468, 177, 22, QUARTER, 400],
  ["HUNDSTURM", 1562, 119, 155, 22, QUARTER, 400],
  ["MEIDLING", 1484, 199, 120, 22, QUARTER, 400],
  ["FAVORITEN", 1751, 237, 136, 22, QUARTER, 400],
  ["WIENERFELD", 1661, 400, 160, 22, QUARTER, 400],
  ["INZERSDORF", 1591, 459, 156, 22, QUARTER, 400],
  ["ERDBERG", 1878, 3.5, 115, 22, QUARTER, 400],
];

const SHIELDS = [
  ["A1", 387, 230.5],
  ["A1", 746.5, 88],
  ["1", 1705, 29],
  ["230", 1794, 160.5],
  ["A23", 2001, 100.5],
  ["A4", 2132, 121.5],
  ["A23", 1865, 309.5],
  ["230", 1756, 335.5],
  ["A2", 1573, 411.5],
  ["224", 1490, 450],
  ["A4", 2264, 220],
  ["A4", 2409, 393.5],
  ["A4", 2569.5, 474],
];

function Layer({ pick, ...rest }) {
  return (
    <g {...rest}>
      {TILES.map((t) => (
        <g key={t.x} transform={`translate(${t.x} 0) scale(${SX} ${SY})`}>
          {pick(t)}
        </g>
      ))}
    </g>
  );
}

function Lines({ name, color, width, opacity }) {
  return (
    <Layer
      fill="none"
      stroke={color}
      strokeWidth={width}
      strokeLinejoin="round"
      strokeLinecap="round"
      opacity={opacity}
      pick={(t) => (t[name] ? <path d={t[name]} vectorEffect="non-scaling-stroke" /> : null)}
    />
  );
}

function Tree({ x, y }) {
  const crown = "M0 -11a5.500 5.500 0 0 1 5.500 3a5.200 5.200 0 0 1 4.500 7.500a4.500 4.500 0 0 1 -5 4.500q-1.500 1.500 -3.500 .5l.6 4.500 2.400 2h-9l2.400 -2 .6 -4.500q-1.500 .8 -3 -.5a4.500 4.500 0 0 1 -5 -4.500a5.200 5.200 0 0 1 4 -7.500a5.500 5.500 0 0 1 5.500 -3z";
  return (
    <path
      d={crown}
      transform={`translate(${x} ${y})`}
      fill="#437f1f"
      stroke="#eaf1df"
      strokeWidth="2.500"
      strokeLinejoin="round"
      paintOrder="stroke"
    />
  );
}

function MapDrawing() {
  return (
    <svg className="block h-[496px] w-[2880px]" viewBox="0 0 2880 496">
      <rect width="2880" height="496" fill={LAND} />
      <path d={relief(11, 95, -20, 840, -10, 500, 17)} fill="#e7e3d8" />
      <path d={relief(17, 26, 380, 680, 60, 230, 11)} fill="#dfdbcf" opacity="0.7" />
      <path d={relief(29, 60, -20, 840, -10, 500, 11)} fill="#f1eee7" />
      <path d={relief(31, 12, 1095, 1150, 40, 180, 9)} fill="#e6e0d8" />

      <Layer pick={(t) => t.woods.map((d, i) => <path key={i} d={d} fill={WOOD} />)} />
      <path d={relief(47, 26, 790, 1065, 30, 350, 12)} fill="#cfdfbc" opacity="0.9" />
      <path d={relief(53, 20, 780, 1065, 30, 370, 6)} fill="#dfebcf" opacity="0.8" />
      <path
        d="M882 60L900 40 898 90 880 140 868 150 862 185 835 235 812 270 790 260 806 225 838 180 850 130 868 100z"
        fill="#cfdfbc"
      />
      <path d="M770 330L800 300 850 290 885 262 905 250 880 300 850 310 815 338z" fill="#cfdfbc" opacity="0.8" />

      <path d={smallGreens(5)} fill={PARK} />
      <Layer pick={(t) => t.areas.map(([c, d], i) => <path key={i} d={d} fill={c} />)} />
      <g fill="none" stroke="#b2dc97" strokeWidth="4">
        <path d="M2202 98Q2206 88 2222 90T2250 104L2274 132 2280 150 2266 156 2244 148 2206 112Z" />
        <path d="M2215 100L2250 130M2226 100L2262 138" strokeWidth="3" strokeDasharray="12 5" />
        <path d="M2265 30L2310 85M2330 95L2365 135" strokeWidth="3" />
      </g>

      <Layer
        fill="none"
        stroke={WATER}
        strokeLinejoin="round"
        pick={(t) => t.streams.map(([w, d], i) => <path key={i} d={d} strokeWidth={w} vectorEffect="non-scaling-stroke" />)}
      />
      <Layer
        fill="none"
        stroke="#69afe0"
        strokeWidth="1.200"
        pick={(t) =>
          t.x === 2150 ? (
            <path
              d="M230 172L288 169M60 410L215 508 370 602 545 714 640 795 750 885 860 985 1000 1085 1140 1195"
              vectorEffect="non-scaling-stroke"
            />
          ) : null
        }
      />

      <g fill="none" stroke="#fff" strokeWidth="1.700" opacity="0.9">
        {QUARTERS.map(([pts, angle, step, keep], i) => {
          const b = box(pts);
          return (
            <g key={i}>
              <clipPath id={`quarter-${i}`}>
                <polygon points={pts} />
              </clipPath>
              <g clipPath={`url(#quarter-${i})`}>
                <path d={streetGrid(i + 3, b.size, step, keep)} transform={`translate(${b.cx} ${b.cy}) rotate(${angle})`} />
              </g>
            </g>
          );
        })}
      </g>
      {/* Large parks stay clear of the street grid. */}
      <Layer
        pick={(t) =>
          t.x === 720 ? (
            <>
              <path fill={PARK} d="M1425 335L1470 345 1568 395 1568 600 1530 610 1560 660 1500 670 1440 640 1430 600 1380 590 1375 540 1400 370zM1035 365L1060 400 1060 440 1090 500 1085 515 1010 490 1000 445 1010 400z" />
              <path fill={WATER} d="M1486 532l18 4 4 12 -12 2zM1478 572l14 0 4 18 -18 -2z" />
              <path fill={PINK} d="M1032 585L1050 610 1080 690 1110 760 1145 830 1050 850 1040 780 1030 735 1005 740 985 690 1015 680 1010 640 1030 625z" />
              <path fill={PARK} d="M1040 780l22 0 8 55 -26 8zM1086 795l20 -5 0 28 -20 10zM992 682l10 0 5 18 -14 2z" />
            </>
          ) : t.x === 1440 ? (
            <>
              <path fill={PARK} d="M300 805L415 860 410 900 370 1035 320 960 270 900 265 870zM460 870L585 930 570 1140 395 1040 430 960zM780 60L830 80 840 120 900 150 895 230 830 210 800 130zM695 1060L770 1000 860 1030 790 1090 770 1115 720 1090z" />
              <path fill={WATER} d="M425 975L450 966 480 990 508 1015 500 1060 485 1075 470 1030 430 1015zM418 1098L440 1100 445 1112 422 1110z" />
              <path fill={PINK} d="M440 670L510 625 500 700 460 770 435 700z" />
              <path fill={OLIVE} d="M245 670L300 660 395 670 365 715 235 700z" />
            </>
          ) : null
        }
      />
      <path d="M1583 288L1598 325M1600 292L1612 318" fill="none" stroke="#b2dc97" strokeWidth="5" strokeDasharray="14 5" />

      <Lines name="thin" color="#fff" width={1.6} opacity={0.9} />
      <Lines name="minor" color="#d7d8e6" width={6.6} />
      <Lines name="major" color="#d7d8e6" width={8.6} />
      <Lines name="trunk" color="#d7d8e6" width={10.6} />
      <Lines name="minor" color="#fff" width={4} />
      <Lines name="major" color="#fff" width={6} />
      <Lines name="trunk" color="#fff" width={7.8} />
      <Lines name="ramps" color="#f4a76c" width={1.6} />
      <Lines name="motorway" color="#fff" width={10} />
      <Lines name="motorway" color="#f4a76c" width={6.6} />

      <Lines name="border" color="#ffffff" width={7} opacity={0.25} />
      <Layer
        fill="none"
        stroke="#9698ab"
        strokeWidth="2.400"
        strokeDasharray="11 4 7 4"
        pick={(t) => (t.border ? <path d={t.border} vectorEffect="non-scaling-stroke" /> : null)}
      />

      <Tree x={918} y={211} />
      <Tree x={1834} y={57.5} />
      <circle cx="2112" cy="35" r="4.500" fill="#6b4a3e" stroke="#fff" strokeWidth="1.500" />
      <path
        d="M2170 440l2-2h9l2 2v3h-1v9h2v5h-15v-5h2v-9h-1zM2173.500 445.500v1.500h6v-1.500z"
        fill="#437f1f"
        fillRule="evenodd"
        stroke="#eef0dc"
        strokeWidth="2"
        paintOrder="stroke"
      />

      <g fontFamily="Roboto, 'Open Sans', sans-serif" strokeLinejoin="round">
        {LABELS.map(([text, x, y, w, size, color, weight]) => (
          <text
            key={text}
            x={x}
            y={y}
            fontSize={size}
            fill={color}
            fontWeight={weight}
            textLength={w}
            lengthAdjust={color === QUARTER ? "spacing" : "spacingAndGlyphs"}
            stroke={color === QUARTER ? "#f4f1f0" : color === GREEN ? "#e6efd8" : "#f3f0ea"}
            strokeWidth="3.500"
            paintOrder="stroke"
          >
            {text}
          </text>
        ))}
        <text
          transform="translate(439 229) rotate(-15.500)"
          fontSize="21"
          fill={PLACE}
          textLength="138"
          lengthAdjust="spacingAndGlyphs"
          stroke="#f3f0ea"
          strokeWidth="3"
          paintOrder="stroke"
        >
          West Autobahn
        </text>
      </g>

      <g fontFamily="Roboto, sans-serif" fontWeight="700" fontSize="18" textAnchor="middle">
        {SHIELDS.map(([text, x, y]) => {
          const w = text.length > 2 ? 48 : 36;
          return (
            <g key={`${text}-${x}`}>
              <rect x={x - w / 2 - 1.5} y={y - 13.5} width={w + 3} height="27" rx="5" fill="#fff" />
              <rect x={x - w / 2} y={y - 12} width={w} height="24" rx="3.500" fill="#3f51a3" />
              <text x={x} y={y + 6.5} fill="#fff" letterSpacing="0.500">
                {text}
              </text>
            </g>
          );
        })}
      </g>
    </svg>
  );
}

function MapboxLogo() {
  return (
    <svg className="h-[52px] w-[180px]" viewBox="0 0 180 52">
      <circle cx="23" cy="25" r="21" fill="#a09e99" />
      <circle cx="23" cy="25" r="18.500" fill="#fff" />
      <path d="M14 34.500c-1-7-.5-13 3-17a11 11 0 1 1 14 14c-4 3.500-10 4-17 3z" fill="#a09e99" />
      <path d="M25 17.500l1.700 4.300 4.300 1.700-4.300 1.700L25 29.500l-1.700-4.300-4.300-1.700 4.300-1.700z" fill="#fff" />
      <text
        x="49"
        y="34.500"
        fontFamily="Lato, Inter, sans-serif"
        fontWeight="900"
        fontSize="34"
        textLength="122"
        lengthAdjust="spacingAndGlyphs"
        fill="#fff"
        stroke="#a09e99"
        strokeWidth="6"
        strokeLinejoin="round"
        paintOrder="stroke"
      >
        mapbox
      </text>
    </svg>
  );
}

function MapPanel() {
  return (
    <section className="relative h-[496px] overflow-hidden">
      <MapDrawing />
      <div className="absolute bottom-2 left-3">
        <MapboxLogo />
      </div>
      <div className="absolute right-0 bottom-0 flex h-10 items-center bg-white/50 px-[10px] font-['Liberation_Sans',sans-serif] text-2xl leading-10 text-black/75">
        <span className="tracking-[0.3px]">© Mapbox © OpenStreetMap</span>
        <span className="ml-[11px] font-bold">Improve this map</span>
      </div>
    </section>
  );
}

/* ------------------------------------------------------------------ */

const FEATURES = [
  {
    title: "Anmelden",
    text: "Jeder User muss sich mit seinem eigenen Account auf der Login-Seite Anmelden.",
    paths: ["M13 9l3 3m0 0l-3 3m3-3H8m13 0a9 9 0 11-18 0 9 9 0 0118 0z"],
  },
  {
    title: "Tracking",
    text: "Um sich vollständig tracken lassen zu können, muss der Datenschutzswitch aktiv sein. Nach Beginn des trackings kann es mehrer Sekunden dauern, bis dieses aktiv ist.",
    paths: [
      "M17.657 16.657L13.414 20.9a1.998 1.998 0 01-2.827 0l-4.244-4.243a8 8 0 1111.314 0z",
      "M15 11a3 3 0 11-6 0 3 3 0 016 0z",
    ],
  },
  {
    title: "HomeIcon",
    text: "Jetzt muss der User nur noch nach hause gehen. Für Sicherheit wird gesorgt.",
    paths: [
      "M3 12l2-2m0 0l7-7 7 7M5 10v10a1 1 0 001 1h3m10-11l2 2m-2-2v10a1 1 0 01-1 1h-3m-6 0a1 1 0 001-1v-4a1 1 0 011-1h2a1 1 0 011 1v4a1 1 0 001 1m-6 0h6",
    ],
  },
];

function FeatureCard({ title, text, paths }) {
  return (
    <div className="rounded-2xl bg-gray-50 px-12 pb-16">
      <div className="-mt-12 flex flex-col items-center">
        <span className="rounded-xl bg-[#4fa9be] p-6 shadow-[0_20px_30px_-6px_rgba(0,0,0,0.1),0_8px_12px_-4px_rgba(0,0,0,0.06)]">
          <svg
            className="size-12 text-white"
            viewBox="0 0 24 24"
            fill="none"
            stroke="currentColor"
            strokeWidth="2"
            strokeLinecap="round"
            strokeLinejoin="round"
          >
            {paths.map((d) => (
              <path key={d} d={d} />
            ))}
          </svg>
        </span>
        <h3 className="mt-16 text-4xl leading-[56px] font-[560] tracking-[-1.85px] text-[#111827]">{title}</h3>
        <p className="mt-10 text-center text-[28px] leading-10 tracking-[-0.44px] text-[#6b7280]">{text}</p>
      </div>
    </div>
  );
}

export default function App() {
  return (
    <main className="min-h-[1576px] w-[2880px] overflow-hidden bg-white font-['Inter',sans-serif]">
      <MapPanel />
      <section className="mx-auto w-[2432px] pt-32 text-center">
        <h2 className="text-4xl leading-[56px] font-semibold tracking-[-0.75px] text-[#4fa9be]">Coming Home Safe</h2>
        <p className="mt-[17px] text-7xl leading-[80px] font-bold tracking-[-3.85px] text-[#111827]">
          Derzeit lassen sich keine User tracken
        </p>
        <p className="mt-[39px] text-4xl leading-[56px] tracking-[-1.12px] text-[#6b7280]">
          Nach Beginn des Trackings, kann es immer einen Moment bis zur Darstellung dauern.
        </p>
        <div className="mt-36 grid grid-cols-3 items-start gap-24">
          {FEATURES.map((f) => (
            <FeatureCard key={f.title} {...f} />
          ))}
        </div>
      </section>
    </main>
  );
}
